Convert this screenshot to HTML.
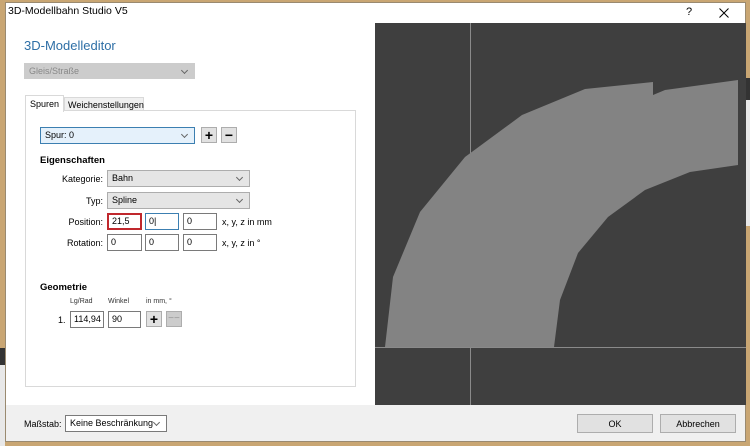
<!DOCTYPE html>
<html><head><meta charset="utf-8"><style>
*{margin:0;padding:0;box-sizing:border-box}
body{width:750px;height:446px;position:relative;overflow:hidden;background:#c9a673;font-family:"Liberation Sans",sans-serif;font-size:9px;color:#000}
.a{position:absolute}
.dlg{left:5px;top:2px;width:741px;height:440px;background:#fff;border:1px solid #9a8a70}
.title{left:8px;top:5px;font-size:10.5px}
.combo{position:absolute;border:1px solid #adadad;background:#e5e5e5;height:17px;padding:2px 0 0 4px;font-size:9px}
.combo:after{content:"";position:absolute;right:7px;top:4px;width:4px;height:4px;border-right:1px solid #666;border-bottom:1px solid #666;transform:rotate(45deg)}
.inp{position:absolute;border:1px solid #7a7a7a;background:#fff;height:17px;padding:2px 0 0 3px;font-size:9px}
.btn{position:absolute;border:1px solid #adadad;background:#e1e1e1;width:16px;height:16px;text-align:center;font-size:14px;line-height:14px;font-weight:bold}
.lbl{position:absolute;font-size:9px;text-align:right}
.b{font-weight:bold;font-size:9.5px}
</style></head><body>
<div class="a" style="left:0;top:348px;width:5px;height:17px;background:#333"></div>
<div class="a" style="left:0;top:365px;width:5px;height:81px;background:#e8e8e8"></div>
<div class="a" style="left:746px;top:78px;width:4px;height:22px;background:#333"></div>
<div class="a" style="left:746px;top:100px;width:4px;height:126px;background:#e8e8e8"></div>
<div class="a dlg"></div>
<div class="a title">3D-Modellbahn Studio V5</div>
<div class="a" style="left:686px;top:6px;font-size:11px">?</div>
<svg class="a" style="left:719px;top:8px" width="10" height="10"><path d="M0.5 0.5L9.5 9.5M9.5 0.5L0.5 9.5" stroke="#000" stroke-width="1"/></svg>
<div class="a" style="left:24px;top:38px;font-size:13px;color:#2e6fa6">3D-Modelleditor</div>
<div class="combo" style="left:24px;top:63px;width:171px;height:16px;background:#ccc;border-color:#ccc;color:#888">Gleis/Straße</div>
<div class="a" style="left:25px;top:110px;width:331px;height:277px;border:1px solid #d9d9d9;background:#fff"></div>
<div class="a" style="left:64px;top:97px;width:80px;height:14px;border:1px solid #d9d9d9;background:#f0f0f0;padding:2px 0 0 3px">Weichenstellungen</div>
<div class="a" style="left:25px;top:95px;width:39px;height:17px;border:1px solid #d9d9d9;border-bottom:none;background:#fff;padding:3px 0 0 4px">Spuren</div>
<div class="combo" style="left:40px;top:127px;width:155px;background:#e5f1fb;border-color:#3c7fb1">Spur: 0</div>
<div class="btn" style="left:201px;top:127px">+</div>
<div class="btn" style="left:221px;top:127px">−</div>
<div class="a b" style="left:40px;top:155px">Eigenschaften</div>
<div class="lbl" style="left:40px;top:174px;width:63px">Kategorie:</div>
<div class="combo" style="left:107px;top:170px;width:143px">Bahn</div>
<div class="lbl" style="left:40px;top:196px;width:63px">Typ:</div>
<div class="combo" style="left:107px;top:192px;width:143px">Spline</div>
<div class="lbl" style="left:40px;top:217px;width:63px">Position:</div>
<div class="inp" style="left:107px;top:213px;width:35px;border:2px solid #c0282d;padding-top:1px">21,5</div>
<div class="inp" style="left:145px;top:213px;width:34px;border-color:#3c7fb1">0|</div>
<div class="inp" style="left:183px;top:213px;width:34px">0</div>
<div class="a" style="left:222px;top:217px">x, y, z in mm</div>
<div class="lbl" style="left:40px;top:238px;width:63px">Rotation:</div>
<div class="inp" style="left:107px;top:234px;width:35px">0</div>
<div class="inp" style="left:145px;top:234px;width:34px">0</div>
<div class="inp" style="left:183px;top:234px;width:34px">0</div>
<div class="a" style="left:222px;top:238px">x, y, z in °</div>
<div class="a b" style="left:40px;top:282px">Geometrie</div>
<div class="a" style="left:70px;top:298px;font-size:7px;color:#333">Lg/Rad</div>
<div class="a" style="left:108px;top:298px;font-size:7px;color:#333">Winkel</div>
<div class="a" style="left:146px;top:298px;font-size:7px;color:#333">in mm, °</div>
<div class="a" style="left:58px;top:315px">1.</div>
<div class="inp" style="left:70px;top:311px;width:34px">114,94</div>
<div class="inp" style="left:108px;top:311px;width:33px">90</div>
<div class="btn" style="left:146px;top:311px">+</div>
<div class="btn" style="left:166px;top:311px;background:#ccc;color:#999;font-weight:normal;font-size:10px">−−</div>
<div class="a" style="left:6px;top:405px;width:739px;height:36px;background:#f0f0f0"></div>
<div class="a" style="left:24px;top:419px">Maßstab:</div>
<div class="combo" style="left:65px;top:415px;width:102px;background:#fff;border-color:#7a7a7a">Keine Beschränkung</div>
<div class="a" style="left:577px;top:414px;width:76px;height:19px;border:1px solid #adadad;background:#e1e1e1;text-align:center;padding-top:4px">OK</div>
<div class="a" style="left:660px;top:414px;width:76px;height:19px;border:1px solid #adadad;background:#e1e1e1;text-align:center;padding-top:4px">Abbrechen</div>
<svg class="a" style="left:375px;top:23px" width="371" height="382" viewBox="375 23 371 382">
<rect x="375" y="23" width="371" height="382" fill="#3f3f3f"/>
<line x1="470.5" y1="23" x2="470.5" y2="405" stroke="#8a8a8a"/>
<line x1="375" y1="347.5" x2="746" y2="347.5" stroke="#8a8a8a"/>
<polygon fill="#838383" points="385,347 393,277 420,212 465,157 522,115 585,89 653,82 653,95 665,90 738,80 738,165 690,172 645,190 608,217 578,253 560,300 554,347"/>
</svg>
</body></html>
